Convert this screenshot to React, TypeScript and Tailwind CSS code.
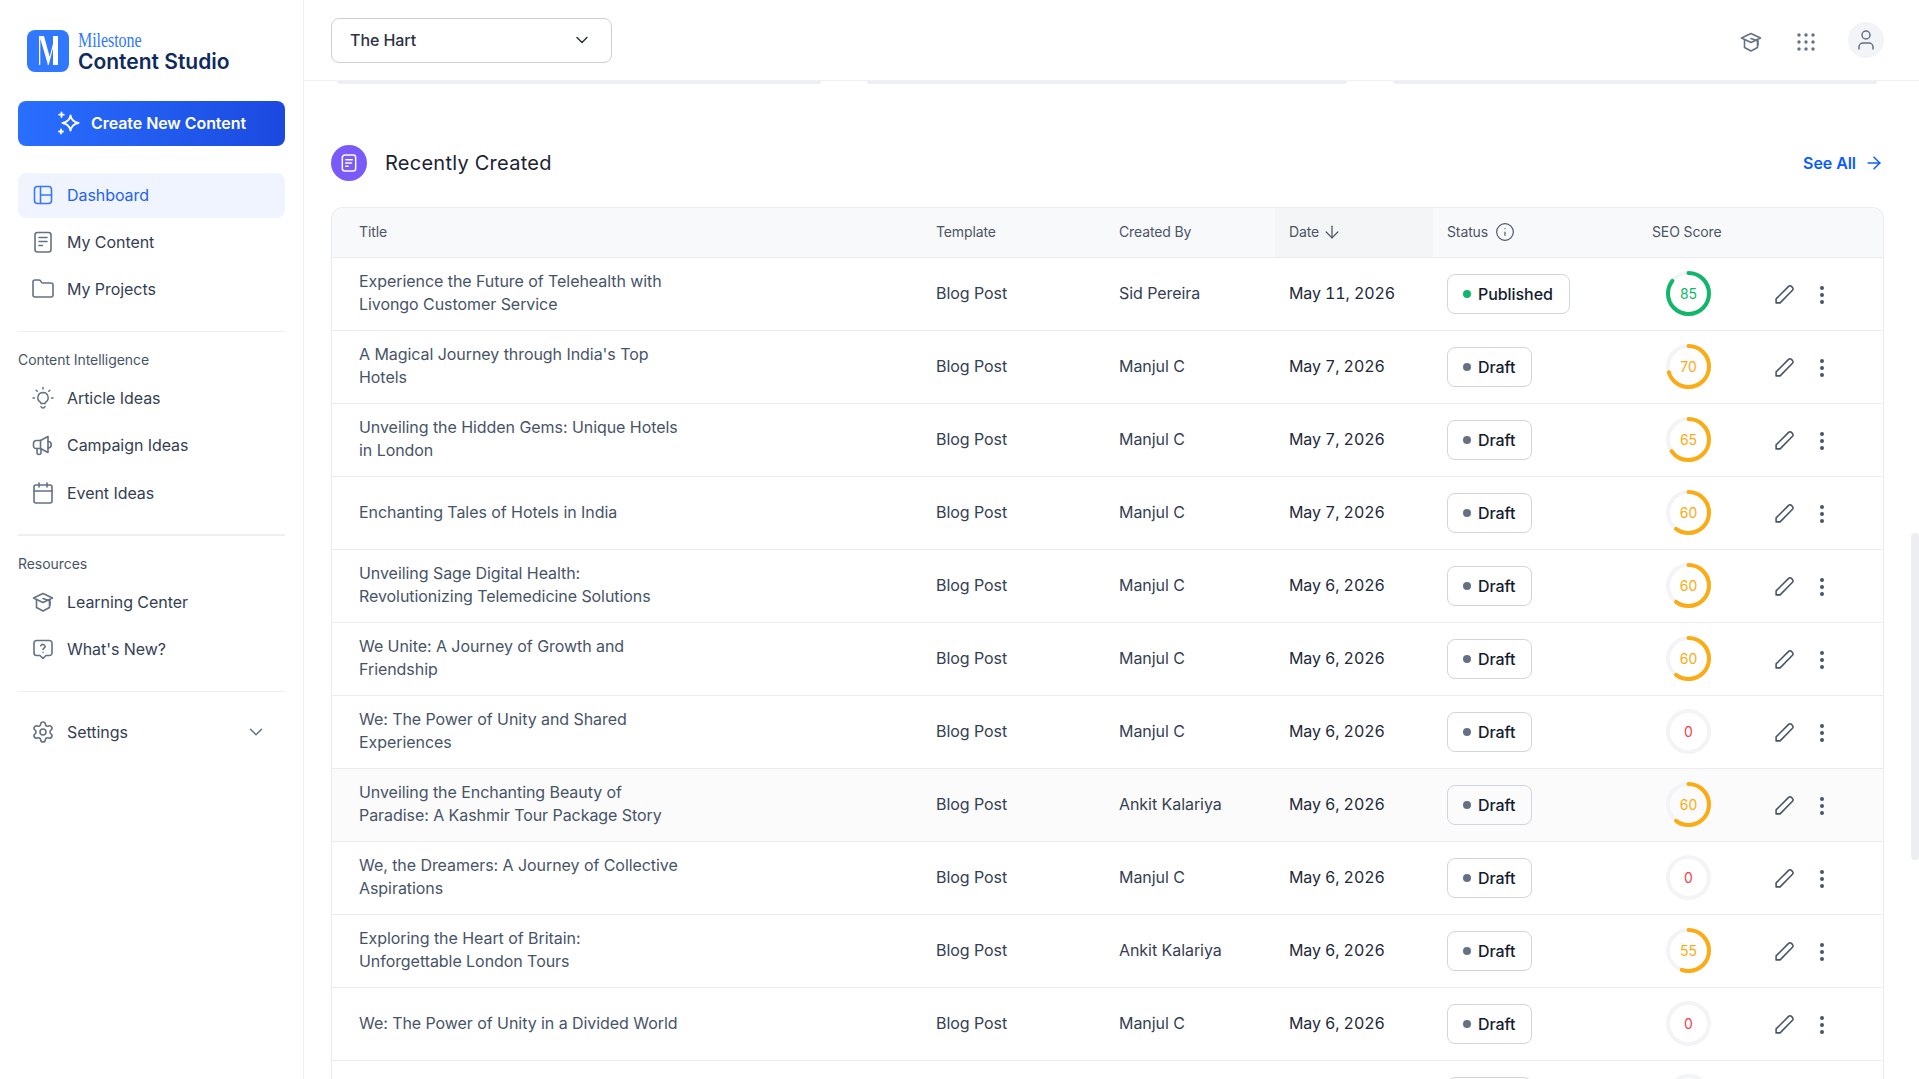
import { ChevronDown, ArrowRight, ArrowDown, Info, Folder, Calendar, Settings, EllipsisVertical, User } from 'lucide-react'

const rows = [
  { title: 'Experience the Future of Telehealth with Livongo Customer Service', by: 'Sid Pereira', date: 'May 11, 2026', status: 'Published', score: 85 },
  { title: "A Magical Journey through India's Top Hotels", by: 'Manjul C', date: 'May 7, 2026', status: 'Draft', score: 70 },
  { title: 'Unveiling the Hidden Gems: Unique Hotels in London', by: 'Manjul C', date: 'May 7, 2026', status: 'Draft', score: 65 },
  { title: 'Enchanting Tales of Hotels in India', by: 'Manjul C', date: 'May 7, 2026', status: 'Draft', score: 60 },
  { title: 'Unveiling Sage Digital Health: Revolutionizing Telemedicine Solutions', by: 'Manjul C', date: 'May 6, 2026', status: 'Draft', score: 60 },
  { title: 'We Unite: A Journey of Growth and Friendship', by: 'Manjul C', date: 'May 6, 2026', status: 'Draft', score: 60 },
  { title: 'We: The Power of Unity and Shared Experiences', by: 'Manjul C', date: 'May 6, 2026', status: 'Draft', score: 0 },
  { title: 'Unveiling the Enchanting Beauty of Paradise: A Kashmir Tour Package Story', by: 'Ankit Kalariya', date: 'May 6, 2026', status: 'Draft', score: 60, hover: true },
  { title: 'We, the Dreamers: A Journey of Collective Aspirations', by: 'Manjul C', date: 'May 6, 2026', status: 'Draft', score: 0 },
  { title: 'Exploring the Heart of Britain: Unforgettable London Tours', by: 'Ankit Kalariya', date: 'May 6, 2026', status: 'Draft', score: 55 },
  { title: 'We: The Power of Unity in a Divided World', by: 'Manjul C', date: 'May 6, 2026', status: 'Draft', score: 0 },
  { title: 'We: The Power of Unity in Diversity', by: 'Manjul C', date: 'May 6, 2026', status: 'Draft', score: 0 },
]

const iconProps = {
  width: 24,
  height: 24,
  viewBox: '0 0 24 24',
  fill: 'none',
  stroke: 'currentColor',
  strokeWidth: 1.6,
  strokeLinecap: 'round' as const,
  strokeLinejoin: 'round' as const,
}

function DashIcon() {
  return (
    <svg {...iconProps}>
      <rect x="3.5" y="3.5" width="17" height="17" rx="3" />
      <path d="M9.5 3.5v17M9.5 12h11" />
    </svg>
  )
}

function DocIcon() {
  return (
    <svg {...iconProps}>
      <rect x="4" y="2.5" width="16" height="19.5" rx="2.5" />
      <path d="M8 7.5h8M8 11.5h8M8 15.500h3.500" />
    </svg>
  )
}

function BulbIcon() {
  return (
    <svg {...iconProps} strokeWidth={1.5}>
      <path d="M12 6.500a5.200 5.200 0 0 0-3 9.400c.6.5.9 1 .9 1.700h4.200c0-.7.3-1.200.9-1.700a5.200 5.200 0 0 0-3-9.400Z" />
      <path d="M10 20.500c.4 1 1.200 1.500 2 1.500s1.600-.5 2-1.500M12 1.500v1.500M5.200 4.200l1 1M18.800 4.200l-1 1M2 12h1.500M20.500 12H22" />
    </svg>
  )
}

function MegaIcon() {
  return (
    <svg {...iconProps}>
      <path d="M9.500 7.500H5.500a3 3 0 0 0-3 3v2.500a2.500 2.500 0 0 0 2.500 2.500h4.500Z" />
      <path d="M9.500 7.500 17 3.500v16l-7.500-4" />
      <path d="M17 8.500a3 3 0 0 1 0 6.500" />
      <path d="M6 15.500v4a2 2 0 0 0 4 0v-3.500" />
    </svg>
  )
}

function CapIcon() {
  return (
    <svg {...iconProps}>
      <path d="M12 3.500 21.500 8 12 12.500 2.500 8Z" />
      <path d="M5.500 10v7.500L12 21l6.500-3.500V10" />
      <path d="M12 8.500l7 2.500v4" />
    </svg>
  )
}

function HelpIcon() {
  return (
    <svg {...iconProps}>
      <path d="M5.500 3.500h13a2.500 2.500 0 0 1 2.500 2.500v10a2.500 2.500 0 0 1-2.500 2.500H15l-3 3-3-3H5.500A2.500 2.500 0 0 1 3 16V6a2.500 2.500 0 0 1 2.500-2.500Z" />
      <path d="M9.800 8.800a2.300 2.300 0 0 1 4.400.7c0 1.500-2.200 1.800-2.200 3" />
      <path d="M12 15.300h.01" />
    </svg>
  )
}

function StarsIcon() {
  return (
    <svg width="24" height="24" viewBox="0 0 24 24" fill="none" stroke="currentColor" strokeWidth="1.800" strokeLinejoin="round" strokeLinecap="round">
      <path d="M13.500 4.500c.8 4.200 2.800 6.500 8 7.500-5.200 1-7.200 3.300-8 7.500-.8-4.200-2.800-6.500-8-7.500 5.200-1 7.200-3.300 8-7.500Z" />
      <path d="M4.500 1.500v4.500M2.200 3.700h4.600M4 18.500v4M2 20.500h4" />
    </svg>
  )
}

function PencilIcon() {
  return (
    <svg width="21" height="21" viewBox="0 0 20 20" fill="none" stroke="currentColor" strokeWidth="1.500" strokeLinejoin="round" strokeLinecap="round">
      <path d="M2 18v-3.800L13.900 2.300a1.900 1.900 0 0 1 2.700 0l1 1a1.900 1.900 0 0 1 0 2.700L5.800 18Z" />
    </svg>
  )
}

function GridDots() {
  return (
    <svg width="18" height="18" viewBox="0 0 18 18" fill="currentColor">
      {[2, 9, 16].map((y) =>
        [2, 9, 16].map((x) => <circle key={`${x}-${y}`} cx={x} cy={y} r="1.700" />),
      )}
    </svg>
  )
}

function Logo() {
  return (
    <svg width="42" height="42" viewBox="0 0 42 42" className="shrink-0">
      <rect width="42" height="42" rx="8" fill="#2f78ff" />
      <path d="M12 6h1.300v29H12ZM12.500 6H17l6 22-2 7ZM20.500 35 28 6h1.200L21.700 35ZM26 6h5v29h-5Z" fill="#fff" />
    </svg>
  )
}

function NavItem({ icon, label, active }: { icon: React.ReactNode; label: string; active?: boolean }) {
  return (
    <div className={active ? 'flex h-[45px] items-center rounded-lg bg-[#eff4fe] pb-[2px] pl-[13px] text-[#2563eb]' : 'flex h-[45px] items-center pb-[2px] pl-[13px] text-[#344054]'}>
      <span className={active ? 'flex w-[24px] justify-center text-[#3b78f6]' : 'flex w-[24px] justify-center text-[#667085]'}>
        {icon}
      </span>
      <span className="ml-[12px] text-[16px]">{label}</span>
    </div>
  )
}

function ScoreRing({ score }: { score: number }) {
  const r = 20.5
  const circ = 2 * Math.PI * r
  const color = score >= 80 ? '#10b76a' : score > 0 ? '#fbab14' : '#f43f4a'
  return (
    <div className="relative h-[45px] w-[45px]">
      <svg width="45" height="45" viewBox="0 0 45 45" className="-rotate-90">
        <circle cx="22.5" cy="22.500" r={r} fill="none" stroke="#f3f4f6" strokeWidth="4" />
        {score > 0 && (
          <circle cx="22.5" cy="22.500" r={r} fill="none" stroke={color} strokeWidth="4" strokeLinecap="round" strokeDasharray={`${(circ * score) / 100} ${circ}`} />
        )}
      </svg>
      <span className="absolute inset-0 flex items-center justify-center text-[14px]" style={{ color }}>
        {score}
      </span>
    </div>
  )
}

export default function App() {
  return (
    <div className="flex h-screen overflow-hidden bg-white font-['Inter',sans-serif] tracking-[-0.06px]">
      <aside className="w-[304px] shrink-0 border-r border-[#eef0f3] px-[18px] pt-[30px]">
        <div className="flex h-[42px] items-center gap-[10px] pl-[9px]">
          <Logo />
          <div className="-ml-[1px] flex flex-col pt-[2px]">
            <span className="origin-left scale-x-[0.8] font-['Liberation_Serif',serif] text-[20px] leading-[18px] text-[#2f78ff]">Milestone</span>
            <span className="text-[21px] font-semibold leading-[25px] tracking-normal text-[#0f2a5e]">Content Studio</span>
          </div>
        </div>
        <button className="mt-[29px] flex h-[45px] w-[267px] items-center justify-center gap-[10px] rounded-lg bg-gradient-to-r from-[#2a6fff] to-[#1c49e0] pb-[2px] text-[16px] font-semibold text-white">
          <StarsIcon />
          Create New Content
        </button>
        <nav className="mt-[27px] flex flex-col gap-[2px]">
          <NavItem icon={<DashIcon />} label="Dashboard" active />
          <NavItem icon={<DocIcon />} label="My Content" />
          <NavItem icon={<Folder strokeWidth={1.6} />} label="My Projects" />
        </nav>
        <div className="mt-[19px] h-px bg-[#eceef2]" />
        <p className="mt-[18px] h-[20px] text-[14px] leading-[20px] text-[#475467]">Content Intelligence</p>
        <div className="mt-[6px] flex flex-col gap-[2px]">
          <NavItem icon={<BulbIcon />} label="Article Ideas" />
          <NavItem icon={<MegaIcon />} label="Campaign Ideas" />
          <div className="pt-[1px]">
            <NavItem icon={<Calendar strokeWidth={1.6} />} label="Event Ideas" />
          </div>
        </div>
        <div className="mt-[18px] h-[2px] bg-[#eceef2]" />
        <p className="mt-[18px] h-[20px] text-[14px] leading-[20px] text-[#475467]">Resources</p>
        <div className="mt-[6px] flex flex-col gap-[2px]">
          <NavItem icon={<CapIcon />} label="Learning Center" />
          <NavItem icon={<HelpIcon />} label="What's New?" />
        </div>
        <div className="mt-[19px] h-px bg-[#eceef2]" />
        <div className="relative mt-[18px]">
          <NavItem icon={<Settings strokeWidth={1.6} />} label="Settings" />
          <ChevronDown size={22} strokeWidth={1.6} className="absolute right-[18px] top-[11px] text-[#667085]" />
        </div>
      </aside>

      <main className="relative min-w-0 flex-1">
        <header className="flex h-[81px] items-center justify-between border-b border-[#f0f1f4] pl-[27px] pr-[35px]">
          <div className="mt-[1px] flex h-[45px] w-[281px] items-center justify-between rounded-lg border border-[#cbd0dc] pb-[1px] pl-[18px] pr-[19px]">
            <span className="text-[16px] font-medium text-[#2b3245]">The Hart</span>
            <ChevronDown size={20} strokeWidth={1.800} className="text-[#2b3245]" />
          </div>
          <div className="flex items-center text-[#667085]">
            <span className="mr-[34px] mt-[4px]">
              <CapIcon />
            </span>
            <span className="mr-[33px] mt-[4px]">
              <GridDots />
            </span>
            <span className="flex h-[36px] w-[36px] items-center justify-center rounded-full bg-[#f2f4f7]">
              <User size={24} strokeWidth={1.5} />
            </span>
          </div>
        </header>

        <div className="flex gap-[46px] pl-[33px] pr-[42px]">
          <div className="h-[3px] w-[484px] rounded-b-lg bg-[#eceef2]" />
          <div className="h-[3px] w-[481px] rounded-b-lg bg-[#eceef2]" />
          <div className="h-[3px] w-[484px] rounded-b-lg bg-[#eceef2]" />
        </div>

        <div className="pl-[27px] pr-[35px]">
          <div className="mt-[61px] flex h-[36px] items-center justify-between">
            <div className="flex items-center gap-[18px]">
              <span className="flex h-[36px] w-[36px] items-center justify-center rounded-full bg-[#7a5af8] text-white">
                <svg width="20" height="20" viewBox="0 0 24 24" fill="none" stroke="currentColor" strokeWidth="1.800" strokeLinecap="round">
                  <rect x="4" y="2.500" width="16" height="19" rx="3" />
                  <path d="M8 8h8M8 12h7M8 16h3" />
                </svg>
              </span>
              <h2 className="text-[20px] font-normal tracking-[0.25px] text-[#1a2233]">Recently Created</h2>
            </div>
            <div className="flex items-center gap-[8px] text-[16px] font-semibold text-[#0b5cff]">
              See All
              <ArrowRight size={20} strokeWidth={1.800} />
            </div>
          </div>

          <div className="mt-[26px] rounded-t-xl border border-b-0 border-[#eaecf0]">
            <div className="flex h-[50px] items-stretch rounded-t-xl border-b border-[#eaecf0] bg-[#f8f9fb] text-[14px] tracking-[-0.12px] text-[#4b5565]">
              <div className="flex w-[592px] items-center pb-[2px] pl-[27px]">Title</div>
              <div className="flex w-[183px] items-center pb-[2px] pl-[12px]">Template</div>
              <div className="flex w-[168px] items-center pb-[2px] pl-[12px]">Created By</div>
              <div className="flex w-[158px] items-center gap-[3px] bg-[#f4f5f6] pb-[2px] pl-[14px]">
                Date
                <ArrowDown size={20} strokeWidth={1.500} />
              </div>
              <div className="flex w-[207px] items-center gap-[7px] pb-[2px] pl-[14px]">
                Status
                <Info size={20} strokeWidth={1.400} />
              </div>
              <div className="flex items-center pb-[2px] pl-[12px]">SEO Score</div>
            </div>

            {rows.map((row) => (
              <div key={row.title} className={row.hover ? 'flex h-[73px] items-center border-b border-[#eaecf0] bg-[#fbfbfb] pb-[2px]' : 'flex h-[73px] items-center border-b border-[#eaecf0] pb-[2px]'}>
                <div className="w-[592px] pl-[27px]">
                  <p className="max-w-[325px] text-[16px] leading-[23px] text-[#475467]">{row.title}</p>
                </div>
                <div className="w-[183px] pl-[12px] text-[16px] text-[#344054]">Blog Post</div>
                <div className="w-[168px] pl-[12px] text-[16px] text-[#344054]">{row.by}</div>
                <div className="w-[158px] pl-[14px] text-[16px] tracking-[-0.12px] tabular-nums text-[#1d2939]">{row.date}</div>
                <div className="w-[207px] pl-[14px]">
                  <span className="mt-[2px] inline-flex h-[40px] items-center gap-[7px] rounded-lg border border-[#d0d5e0] pl-[15px] pr-[16px] text-[16px] font-medium text-[#141c2e]">
                    <span className={row.status === 'Published' ? 'h-[8px] w-[8px] rounded-full bg-[#10b76a]' : 'h-[8px] w-[8px] rounded-full bg-[#667085]'} />
                    {row.status}
                  </span>
                </div>
                <div className="w-[110px] pl-[26px]">
                  <ScoreRing score={row.score} />
                </div>
                <div className="ml-[24px] mt-[2px] text-[#475467]">
                  <PencilIcon />
                </div>
                <div className="ml-[15px] mt-[4px] text-[#475467]">
                  <EllipsisVertical size={24} strokeWidth={2} />
                </div>
              </div>
            ))}
          </div>
        </div>

        <div className="absolute right-0 top-[533px] h-[327px] w-[8px] rounded-full bg-[#eceef2]" />
      </main>
    </div>
  )
}
